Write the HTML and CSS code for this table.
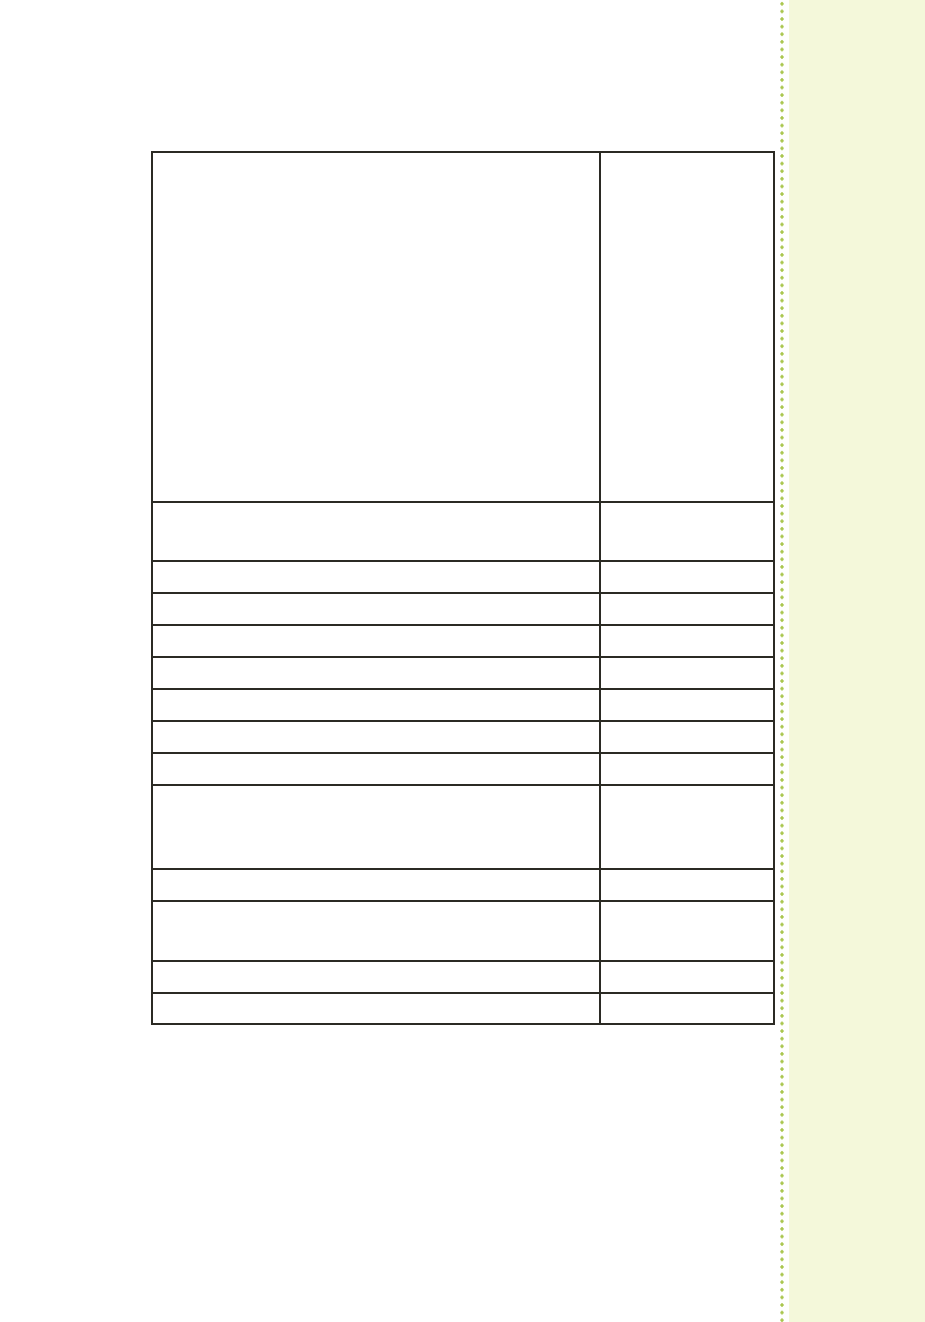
FILE: index.html
```html
<!DOCTYPE html>
<html lang="en">
<head>
<meta charset="utf-8">
<title>Table page</title>
<link rel="stylesheet" href="styles.css">
</head>
<body>
<div class="page">
  <main class="main">
    <div class="grid">
      <div class="cell r1"></div><div class="cell r1"></div>
      <div class="cell r2"></div><div class="cell r2"></div>
      <div class="cell rs"></div><div class="cell rs"></div>
      <div class="cell rs"></div><div class="cell rs"></div>
      <div class="cell rs"></div><div class="cell rs"></div>
      <div class="cell rs"></div><div class="cell rs"></div>
      <div class="cell rs"></div><div class="cell rs"></div>
      <div class="cell rs"></div><div class="cell rs"></div>
      <div class="cell rs"></div><div class="cell rs"></div>
      <div class="cell r10"></div><div class="cell r10"></div>
      <div class="cell rs"></div><div class="cell rs"></div>
      <div class="cell r12"></div><div class="cell r12"></div>
      <div class="cell rs"></div><div class="cell rs"></div>
      <div class="cell rl"></div><div class="cell rl"></div>
    </div>
  </main>
  <div class="dots"></div>
  <aside class="side"></aside>
</div>
</body>
</html>
```
FILE: styles.css
```css
html, body {
  margin: 0;
  padding: 0;
  background: #ffffff;
  font-family: "Liberation Sans", Arial, sans-serif;
}
.page {
  display: flex;
  width: 925px;
  height: 1322px;
}
.main {
  width: 779px;
  padding: 151px 0 0 151px;
  box-sizing: border-box;
}
.grid {
  display: grid;
  grid-template-columns: 446px 172px;
  gap: 2px;
  padding: 2px;
  width: 624px;
  box-sizing: border-box;
  background: #2b2a24;
}
.cell { background: #ffffff; }
.r1 { height: 348px; }
.r2 { height: 57px; }
.rs { height: 30px; }
.r10 { height: 82px; }
.r12 { height: 58px; }
.rl { height: 29px; }
.dots {
  width: 10px;
  height: 100%;
  background-color: #ffffff;
  background-image: radial-gradient(circle at 3px 3.8px, #a9c64e 0, #a9c64e 1.4px, rgba(169,198,78,0) 1.9px);
  background-size: 10px 7.61px;
  background-position: 0 0;
  background-repeat: repeat-y;
}
.side {
  flex: 1;
  background: #f4f8da;
}
```
